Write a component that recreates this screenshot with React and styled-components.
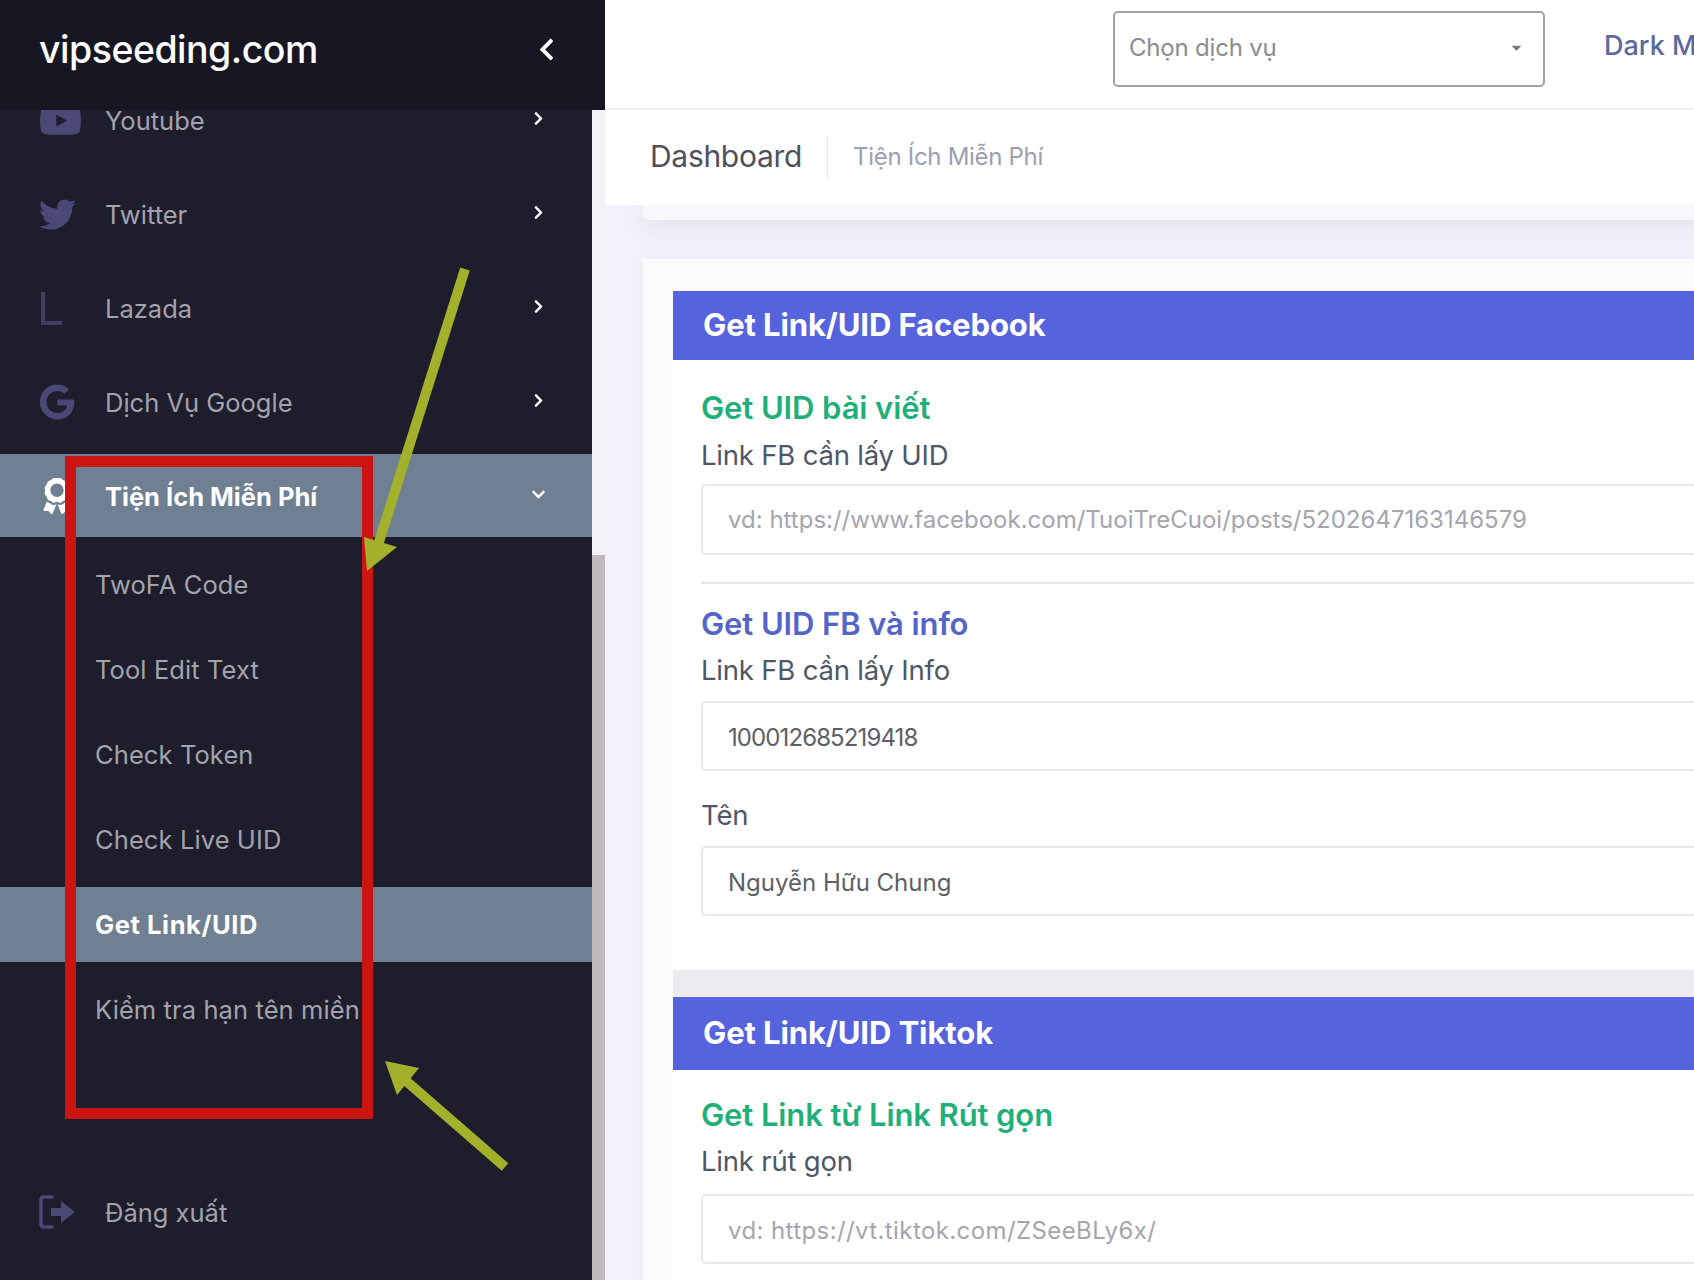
import React from 'react';
import styled, { createGlobalStyle } from 'styled-components';
import {
  FaYoutube,
  FaTwitter,
  FaGoogle,
  FaAward,
  FaChevronRight,
  FaChevronDown,
  FaChevronLeft,
  FaCaretDown,
} from 'react-icons/fa';

const GlobalStyle = createGlobalStyle`
  html, body {
    margin: 0;
    padding: 0;
    background: #f2f3fa;
  }
  * {
    box-sizing: border-box;
  }
`;

const Shell = styled.div`
  position: relative;
  width: 1694px;
  height: 1280px;
  display: flex;
  overflow: hidden;
  font-family: Inter, "Noto Sans", sans-serif;
  background: #f2f3fa;
`;

/* sidebar */

const Side = styled.aside`
  width: 605px;
  flex: none;
  display: flex;
  flex-direction: column;
`;

const Brand = styled.div`
  height: 110px;
  flex: none;
  display: flex;
  align-items: center;
  justify-content: space-between;
  padding: 0 46px 12px 39px;
  background: #171724;
  color: #fff;
  font-size: 37.5px;
  font-weight: 500;
  letter-spacing: -0.5px;
  position: relative;
  z-index: 1;
`;

const SideBody = styled.div`
  flex: 1;
  display: flex;
  min-height: 0;
`;

const Nav = styled.nav`
  width: 592px;
  flex: none;
  background: #1d1d2b;
  overflow: hidden;
`;

const Menu = styled.div`
  margin-top: -37px;
`;

const Row = styled.div`
  height: ${props => (props.active ? '83px' : '94px')};
  margin-top: ${props => (props.active ? '5px' : '0')};
  display: flex;
  align-items: center;
  padding: ${props => (props.active ? '1px' : '0')} 46px 0 39px;
  background: ${props => (props.active ? '#6f8093' : 'transparent')};
  color: ${props => (props.active ? '#fff' : '#a3a3ae')};
  font-size: 25.5px;
  font-weight: ${props => (props.active ? 700 : 400)};
`;

const RowIcon = styled.span`
  width: 66px;
  flex: none;
  display: flex;
  align-items: center;
  color: ${props => (props.active ? '#fff' : '#4b4878')};
  font-size: ${props => props.size || 38}px;
`;

const LazadaMark = styled.span`
  display: block;
  width: 21px;
  height: 33px;
  margin-left: 2px;
  border-left: 4px solid #3f3d66;
  border-bottom: 4px solid #3f3d66;
`;

const RowLabel = styled.span`
  flex: 1;
`;

const Chevron = styled.span`
  display: flex;
  padding-bottom: 3px;
  color: #fff;
  font-size: 15px;
`;

const SubMenu = styled.div`
  padding-top: 5px;
`;

const SubItem = styled.div`
  height: ${props => (props.active ? '75px' : '85px')};
  margin: ${props => (props.active ? '5px 0' : '0')};
  display: flex;
  align-items: center;
  padding-left: 95px;
  white-space: nowrap;
  background: ${props => (props.active ? '#6f8093' : 'transparent')};
  color: ${props => (props.active ? '#fff' : '#a3a3ae')};
  font-size: 25.5px;
  font-weight: ${props => (props.active ? 700 : 400)};
  letter-spacing: ${props => (props.active ? '0.6px' : '0.1px')};
`;

const LogoutWrap = styled.div`
  margin-top: 113px;
`;

const ScrollTrack = styled.div`
  width: 13px;
  flex: none;
  padding-top: 445px;
  background: #f3f3f7;
`;

const ScrollThumb = styled.div`
  height: 100%;
  background: #c0b8ba;
`;

/* main column */

const Main = styled.main`
  flex: 1;
  min-width: 0;
  display: flex;
  flex-direction: column;
`;

const Topbar = styled.header`
  height: 110px;
  flex: none;
  display: flex;
  align-items: center;
  gap: 59px;
  padding: 0 0 10px 508px;
  background: #fff;
  border-bottom: 2px solid #f0f1f6;
  white-space: nowrap;
`;

const ServiceSelect = styled.div`
  width: 432px;
  height: 76px;
  flex: none;
  display: flex;
  align-items: center;
  justify-content: space-between;
  padding: 0 19px 3px 14px;
  border: 2px solid #a3a3a3;
  border-radius: 5px;
  color: #8b8b90;
  font-size: 24px;
  letter-spacing: -0.2px;
  svg {
    font-size: 15px;
    color: #777;
  }
`;

const ModeLabel = styled.span`
  color: #5a6a9c;
  font-size: 27px;
  font-weight: 500;
  padding-bottom: 8px;
`;

const Crumbs = styled.div`
  height: 95px;
  flex: none;
  display: flex;
  align-items: center;
  padding-left: 45px;
  background: #fff;
`;

const CrumbTitle = styled.span`
  padding: 0 25px 4px 0;
  color: #50505c;
  font-size: 30px;
  letter-spacing: -0.3px;
`;

const CrumbSep = styled.span`
  width: 1px;
  height: 43px;
  background: #e8e8ee;
`;

const CrumbLink = styled.span`
  padding: 0 0 2px 25px;
  color: #9b9fb0;
  font-size: 24px;
  letter-spacing: -0.3px;
`;

const Content = styled.div`
  flex: 1;
  min-height: 0;
  padding-left: 38px;
  overflow: hidden;
`;

const PrevCard = styled.div`
  width: 1400px;
  height: 15px;
  background: #f8f8fc;
  border-radius: 0 0 6px 6px;
  box-shadow: 0 6px 22px rgba(70, 70, 110, 0.12);
`;

const OuterCard = styled.div`
  width: 1400px;
  margin-top: 39px;
  padding: 32px 0 0 30px;
  background: #fbfbfc;
  box-shadow: 0 0 14px rgba(90, 90, 130, 0.04);
`;

const Stack = styled.div`
  display: flex;
  flex-direction: column;
  gap: 27px;
  background: #ececf0;
`;

const Panel = styled.section`
  background: #fff;
`;

const PanelHead = styled.div`
  height: ${props => props.h}px;
  display: flex;
  align-items: center;
  padding: 0 0 2px 30px;
  background: #5564dc;
  color: #fff;
  font-size: 31px;
  font-weight: 700;
  letter-spacing: -0.1px;
`;

const PanelBody = styled.div`
  padding: ${props => props.pad};
`;

const Heading = styled.div`
  height: 34px;
  margin-top: ${props => props.mt || 0}px;
  color: ${props => props.color};
  font-size: 31px;
  font-weight: 600;
  line-height: 34px;
  letter-spacing: -0.1px;
`;

const Label = styled.label`
  display: block;
  height: 30px;
  margin-top: ${props => props.mt}px;
  color: #4e5768;
  font-size: 27.5px;
  line-height: 30px;
  letter-spacing: -0.2px;
`;

const Field = styled.input`
  display: block;
  width: 100%;
  height: ${props => props.h || 70}px;
  margin-top: ${props => props.mt}px;
  padding: ${props => (props.spacing === '0px' ? '0' : '2px')} 25px 0;
  border: 2px solid #e6e8ec;
  border-radius: 5px;
  background: #fff;
  color: #5c5f68;
  font-family: inherit;
  font-size: 24px;
  letter-spacing: ${props => props.spacing || '0'};
  outline: none;
  &::placeholder {
    color: #a4a5ad;
    opacity: 1;
  }
`;

const Divider = styled.hr`
  height: 2px;
  margin: 27px 0 0;
  border: 0;
  background: #e6e7ea;
`;

/* annotations drawn over the screenshot */

const RedFrame = styled.div`
  position: absolute;
  left: 65px;
  top: 456px;
  width: 308px;
  height: 663px;
  border: 11px solid #cc1512;
  pointer-events: none;
`;

const Arrows = styled.svg`
  position: absolute;
  left: 0;
  top: 0;
  width: 1694px;
  height: 1280px;
  pointer-events: none;
`;

function LogoutIcon() {
  return (
    <svg width="38" height="36" viewBox="0 0 38 36" fill="none">
      <path
        d="M13 3 H5 Q2 3 2 6 V30 Q2 33 5 33 H13"
        stroke="currentColor"
        strokeWidth="3.5"
        strokeLinecap="round"
      />
      <path d="M12 14 H22 V7 L36 18 L22 29 V22 H12 Z" fill="currentColor" />
    </svg>
  );
}

const NAV_TOP = [
  { label: 'Youtube', icon: <FaYoutube />, size: 43 },
  { label: 'Twitter', icon: <FaTwitter />, size: 37 },
  { label: 'Lazada', icon: <LazadaMark /> },
  { label: 'Dịch Vụ Google', icon: <FaGoogle />, size: 36 },
];

const SUB_ITEMS = [
  { label: 'TwoFA Code' },
  { label: 'Tool Edit Text' },
  { label: 'Check Token' },
  { label: 'Check Live UID' },
  { label: 'Get Link/UID', active: true },
  { label: 'Kiểm tra hạn tên miền' },
];

export default function App() {
  return (
    <Shell>
      <GlobalStyle />
      <Side>
        <Brand>
          <span>vipseeding.com</span>
          <FaChevronLeft size={25} />
        </Brand>
        <SideBody>
          <Nav>
            <Menu>
              {NAV_TOP.map(item => (
                <Row key={item.label}>
                  <RowIcon size={item.size}>{item.icon}</RowIcon>
                  <RowLabel>{item.label}</RowLabel>
                  <Chevron>
                    <FaChevronRight />
                  </Chevron>
                </Row>
              ))}
              <Row active>
                <RowIcon active size={36}>
                  <FaAward />
                </RowIcon>
                <RowLabel>Tiện Ích Miễn Phí</RowLabel>
                <Chevron>
                  <FaChevronDown />
                </Chevron>
              </Row>
              <SubMenu>
                {SUB_ITEMS.map(item => (
                  <SubItem key={item.label} active={item.active}>
                    {item.label}
                  </SubItem>
                ))}
              </SubMenu>
              <LogoutWrap>
                <Row>
                  <RowIcon>
                    <LogoutIcon />
                  </RowIcon>
                  <RowLabel>Đăng xuất</RowLabel>
                </Row>
              </LogoutWrap>
            </Menu>
          </Nav>
          <ScrollTrack>
            <ScrollThumb />
          </ScrollTrack>
        </SideBody>
      </Side>

      <Main>
        <Topbar>
          <ServiceSelect>
            <span>Chọn dịch vụ</span>
            <FaCaretDown />
          </ServiceSelect>
          <ModeLabel>Dark Mode</ModeLabel>
        </Topbar>
        <Crumbs>
          <CrumbTitle>Dashboard</CrumbTitle>
          <CrumbSep />
          <CrumbLink>Tiện Ích Miễn Phí</CrumbLink>
        </Crumbs>
        <Content>
          <PrevCard />
          <OuterCard>
            <Stack>
              <Panel>
                <PanelHead h={69}>Get Link/UID Facebook</PanelHead>
                <PanelBody pad="31px 28px 54px 28px">
                  <Heading color="#1fb07a">Get UID bài viết</Heading>
                  <Label mt={15}>Link FB cần lấy UID</Label>
                  <Field
                    mt={14}
                    h={71}
                    readOnly
                    spacing="0px"
                    placeholder="vd: https://www.facebook.com/TuoiTreCuoi/posts/5202647163146579"
                  />
                  <Divider />
                  <Heading color="#5564c8" mt={23}>
                    Get UID FB và info
                  </Heading>
                  <Label mt={14}>Link FB cần lấy Info</Label>
                  <Field mt={16} readOnly spacing="-0.9px" value="100012685219418" />
                  <Label mt={29}>Tên</Label>
                  <Field mt={16} readOnly value="Nguyễn Hữu Chung" />
                </PanelBody>
              </Panel>
              <Panel>
                <PanelHead h={73}>Get Link/UID Tiktok</PanelHead>
                <PanelBody pad="28px 28px 40px 28px">
                  <Heading color="#1fb07a">Get Link từ Link Rút gọn</Heading>
                  <Label mt={14}>Link rút gọn</Label>
                  <Field
                    mt={18}
                    readOnly
                    spacing="0.4px"
                    placeholder="vd: https://vt.tiktok.com/ZSeeBLy6x/"
                  />
                </PanelBody>
              </Panel>
            </Stack>
          </OuterCard>
        </Content>
      </Main>

      <RedFrame />
      <Arrows viewBox="0 0 1694 1280">
        <line x1="465" y1="269" x2="378" y2="545" stroke="#a3b02c" strokeWidth="10" />
        <polygon points="367,571 364,537 397,547" fill="#a3b02c" />
        <line x1="505" y1="1167" x2="405" y2="1080" stroke="#a3b02c" strokeWidth="10" />
        <polygon points="385,1061 419,1068 397,1095" fill="#a3b02c" />
      </Arrows>
    </Shell>
  );
}
